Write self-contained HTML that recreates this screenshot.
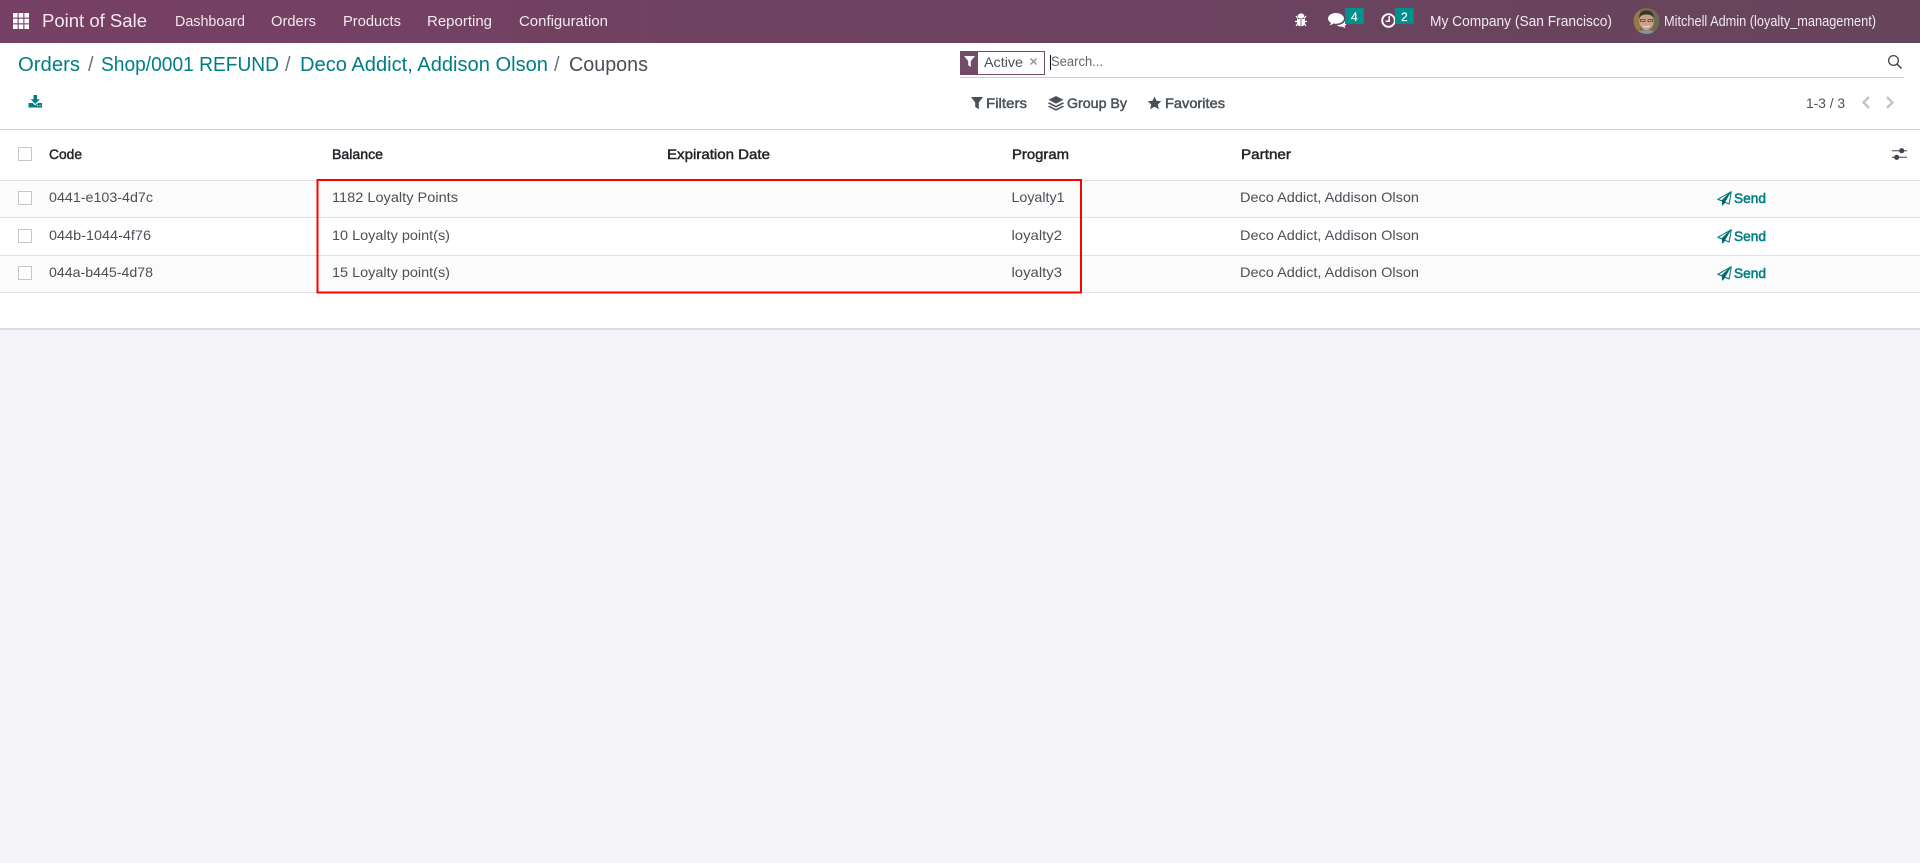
<!DOCTYPE html>
<html lang="en">
<head>
<meta charset="utf-8">
<title>Coupons - Point of Sale</title>
<style>
html,body{margin:0;padding:0;background:#f4f4f9;width:1920px;height:863px;overflow:hidden}
svg{display:block}
text{font-family:"Liberation Sans",sans-serif;font-size:14px;fill:#4c5057}
.nav{fill:#f1e9ee;font-size:14.5px}
.bc{font-size:20px;fill:#017e84}
.sl{font-size:20px;fill:#6f7278}
.hd{fill:#212529;stroke:#212529;stroke-width:.45px}
.cp{fill:#495057;stroke:#495057;stroke-width:.45px}
.snd{fill:#017e84;stroke:#017e84;stroke-width:.55px}
</style>
</head>
<body>
<svg width="1920" height="863" viewBox="0 0 1920 863" xmlns="http://www.w3.org/2000/svg">
<defs>
<linearGradient id="navg" x1="0" x2="1" y1="0" y2="0"><stop offset="0" stop-color="#764065"/><stop offset="1" stop-color="#66445c"/></linearGradient>
<clipPath id="av"><circle cx="1646.5" cy="21" r="13"/></clipPath>
<g id="plane">
<path d="M14.300 .7L.8 8.300l4 1.500L14.300 .7l-2.200 12.300-4.200-1.800-2.400 2.800v-4" fill="none" stroke="#017e84" stroke-width="1.100" stroke-linejoin="round"/>
<path d="M5 10l9-9-6 10.200-2.300 2.900z" fill="#0b5f66"/>
</g>
</defs>

<!-- main panels -->
<rect width="1920" height="863" fill="#f4f4f9"/>
<rect y="43" width="1920" height="286" fill="#fff"/>
<rect y="328" width="1920" height="2" fill="#dcdce2"/>

<!-- navbar -->
<rect width="1920" height="43" fill="url(#navg)"/>
<g fill="#fff">
<rect x="13" y="13" width="4.600" height="4.600"/><rect x="18.700" y="13" width="4.600" height="4.600"/><rect x="24.400" y="13" width="4.600" height="4.600"/>
<rect x="13" y="18.700" width="4.600" height="4.600"/><rect x="18.700" y="18.700" width="4.600" height="4.600"/><rect x="24.400" y="18.700" width="4.600" height="4.600"/>
<rect x="13" y="24.400" width="4.600" height="4.600"/><rect x="18.700" y="24.400" width="4.600" height="4.600"/><rect x="24.400" y="24.400" width="4.600" height="4.600"/>
</g>
<text x="42" y="27" class="nav" style="font-size:18px" textLength="105" lengthAdjust="spacingAndGlyphs">Point of Sale</text>
<text x="175" y="26" class="nav" textLength="70" lengthAdjust="spacingAndGlyphs">Dashboard</text>
<text x="271" y="26" class="nav" textLength="45" lengthAdjust="spacingAndGlyphs">Orders</text>
<text x="343" y="26" class="nav" textLength="58" lengthAdjust="spacingAndGlyphs">Products</text>
<text x="427" y="26" class="nav" textLength="65" lengthAdjust="spacingAndGlyphs">Reporting</text>
<text x="519" y="26" class="nav" textLength="89" lengthAdjust="spacingAndGlyphs">Configuration</text>

<!-- bug -->
<g fill="#fff">
<ellipse cx="1301" cy="16" rx="3.200" ry="2.600"/>
<path d="M1297 19h8v3.500c0 2.400-1.600 3.800-3.500 3.800h-1c-1.900 0-3.500-1.400-3.500-3.800z"/>
</g>
<path d="M1296 16l2 2.500M1306 16l-2 2.500M1295 21.500h3M1307 21.500h-3M1296 26l2-2.500M1306 26l-2-2.500" stroke="#fff" stroke-width="1.200" fill="none"/>
<path d="M1301 19v7.500" stroke="#6a435e" stroke-width=".8"/>
<!-- chat -->
<path d="M1336 13c-4.400 0-8 2.400-8 5.500 0 1.800 1.200 3.300 3 4.300-.3 1-.9 1.800-1.600 2.500 1.600-.2 3-.9 4-1.800.8.100 1.700.2 2.600.2 4.400 0 8-2.300 8-5.200s-3.600-5.500-8-5.500z" fill="#fff"/>
<path d="M1345 20.500c1 .8 1.500 1.700 1.500 2.700 0 1.200-.8 2.200-2 2.900.2.700.7 1.300 1.200 1.900-1.300-.2-2.400-.7-3.200-1.400-2.300.3-4.500-.3-5.800-1.500 3.800.1 7.800-1.800 8.300-4.600z" fill="#fff"/>
<rect x="1345" y="8" width="19" height="16" fill="#00918e"/>
<text x="1351" y="21" style="font-size:12px;fill:#fff;stroke:#fff;stroke-width:.2px">4</text>
<!-- clock -->
<circle cx="1388.500" cy="20.500" r="6.300" fill="none" stroke="#fff" stroke-width="1.900"/>
<path d="M1389.200 16v5.200h-3.600" fill="none" stroke="#fff" stroke-width="1.500"/>
<rect x="1395" y="8" width="19" height="16" fill="#00918e"/>
<text x="1401" y="21" style="font-size:12px;fill:#fff;stroke:#fff;stroke-width:.2px">2</text>

<text x="1430" y="26" class="nav" textLength="182" lengthAdjust="spacingAndGlyphs">My Company (San Francisco)</text>
<!-- avatar -->
<g clip-path="url(#av)">
<rect x="1633" y="8" width="27" height="26" fill="#7d6a45"/>
<rect x="1633" y="8" width="7" height="26" fill="#96794a"/>
<rect x="1654" y="8" width="6" height="26" fill="#6d6a52"/>
<ellipse cx="1646.500" cy="21.500" rx="7.200" ry="8.500" fill="#c9a08a"/>
<path d="M1639 18c0-5.500 3.500-7.500 7.500-7.500s7.500 2 7 7c-1.500-2-3.500-3-7-3s-6 1-7.500 3.500z" fill="#3a322c"/>
<path d="M1640.500 19.500h4.500v2h-4.500zM1648 19.500h4.500v2h-4.500z" fill="none" stroke="#4f4540" stroke-width=".8"/>
<path d="M1643 26q3.500 1.800 7 0" fill="none" stroke="#eadcd2" stroke-width="1.200"/>
<path d="M1636 34c1-3 5-4 10-4s9 1 11 4z" fill="#87939b"/>
</g>
<text x="1664" y="26" class="nav" textLength="212" lengthAdjust="spacingAndGlyphs">Mitchell Admin (loyalty_management)</text>

<!-- breadcrumb -->
<text x="18" y="71" class="bc" textLength="62" lengthAdjust="spacingAndGlyphs">Orders</text>
<text x="88" y="71" class="sl">/</text>
<text x="101" y="71" class="bc" textLength="178" lengthAdjust="spacingAndGlyphs">Shop/0001 REFUND</text>
<text x="285" y="71" class="sl">/</text>
<text x="300" y="71" class="bc" textLength="248" lengthAdjust="spacingAndGlyphs">Deco Addict, Addison Olson</text>
<text x="554" y="71" class="sl">/</text>
<text x="569" y="71" class="bc" style="fill:#4b4f55" textLength="79" lengthAdjust="spacingAndGlyphs">Coupons</text>

<!-- download -->
<path d="M33.500 95h3.500v4.200h2.800l-4.500 4.800-4.600-4.800h2.800z" fill="#017e84"/>
<path d="M28.500 103h4l2.800 2.400 2.800-2.400h3.900v4.500h-13.500z" fill="#017e84"/>
<rect x="37" y="105" width="1.200" height="1" fill="#d8efef"/><rect x="39.500" y="105" width="1.200" height="1" fill="#d8efef"/>

<!-- search -->
<rect x="960.500" y="51.500" width="84" height="23" fill="#fff" stroke="#714b67"/>
<rect x="960" y="51" width="18" height="24" fill="#714b67"/>
<path d="M964 56h11l-4.200 5v6l-2.600-1.800v-4.200z" fill="#fff"/>
<text x="984" y="67" style="fill:#4c5057" textLength="39" lengthAdjust="spacingAndGlyphs">Active</text>
<path d="M1030.500 58.500l6 6M1036.500 58.500l-6 6" stroke="#8a8d93" stroke-width="1.300"/>
<rect x="1050" y="55" width="1" height="15" fill="#111"/>
<text x="1051" y="66" style="fill:#5f6670" textLength="52" lengthAdjust="spacingAndGlyphs">Search...</text>
<rect x="960" y="77" width="944" height="1" fill="#cfcfd3"/>
<circle cx="1893.500" cy="60.500" r="4.900" fill="none" stroke="#3e4650" stroke-width="1.300"/>
<path d="M1897 64l4.500 4.500" stroke="#3e4650" stroke-width="1.500"/>

<!-- filters row -->
<path d="M971 97h12l-4.200 5.500v6.800l-3.600-2.300v-4.500z" fill="#495057"/>
<text x="986" y="108" class="cp" textLength="41" lengthAdjust="spacingAndGlyphs">Filters</text>
<path d="M1056 96l7.500 3.800-7.500 3.800-7.500-3.800z" fill="#495057"/>
<path d="M1049 102.300l7 3.500 7-3.500 1 1.200-8 4-8-4zM1049 105.600l7 3.400 7-3.400 1 1.200-8 3.900-8-3.900z" fill="#495057"/>
<text x="1067" y="108" class="cp" textLength="60" lengthAdjust="spacingAndGlyphs">Group By</text>
<path d="M1154.500 96.500l2 4.300 4.800.5-3.500 3.200 1 4.700-4.300-2.400-4.300 2.400 1-4.700-3.500-3.200 4.800-.5z" fill="#495057"/>
<text x="1165" y="108" class="cp" textLength="60" lengthAdjust="spacingAndGlyphs">Favorites</text>

<!-- pager -->
<text x="1806" y="108" style="fill:#4c5057" textLength="39" lengthAdjust="spacingAndGlyphs">1-3 / 3</text>
<path d="M1869 97l-5.500 5.500 5.500 5.500" fill="none" stroke="#c3c4cb" stroke-width="2.400"/>
<path d="M1887 97l5.500 5.500-5.500 5.500" fill="none" stroke="#c3c4cb" stroke-width="2.400"/>

<rect y="129" width="1920" height="1" fill="#cfcfd6"/>

<!-- rows -->
<rect y="180" width="1920" height="37" fill="#fbfbfb"/>
<rect y="255" width="1920" height="37" fill="#fbfbfb"/>
<g fill="#dfdfe4">
<rect y="180" width="1920" height="1"/><rect y="217" width="1920" height="1"/><rect y="255" width="1920" height="1"/><rect y="292" width="1920" height="1"/>
</g>

<!-- checkboxes -->
<g fill="#fff" stroke="#c4c6cb">
<rect x="18.500" y="147.500" width="13" height="13"/>
<rect x="18.500" y="191.500" width="13" height="13"/>
<rect x="18.500" y="229.500" width="13" height="13"/>
<rect x="18.500" y="266.500" width="13" height="13"/>
</g>

<!-- header -->
<text x="49" y="159" class="hd" textLength="33" lengthAdjust="spacingAndGlyphs">Code</text>
<text x="332" y="159" class="hd" textLength="51" lengthAdjust="spacingAndGlyphs">Balance</text>
<text x="667" y="159" class="hd" textLength="103" lengthAdjust="spacingAndGlyphs">Expiration Date</text>
<text x="1012" y="159" class="hd" textLength="57" lengthAdjust="spacingAndGlyphs">Program</text>
<text x="1241" y="159" class="hd" textLength="50" lengthAdjust="spacingAndGlyphs">Partner</text>
<path d="M1892 150.700h15M1892 157.300h15" stroke="#3f4450" stroke-width="1"/>
<circle cx="1901.700" cy="150.700" r="2.600" fill="#3f4450"/><circle cx="1896.700" cy="157.300" r="2.600" fill="#3f4450"/>

<!-- row 1 -->
<text x="49" y="202" textLength="104" lengthAdjust="spacingAndGlyphs">0441-e103-4d7c</text>
<text x="332" y="202" textLength="126" lengthAdjust="spacingAndGlyphs">1182 Loyalty Points</text>
<text x="1011.500" y="202" textLength="53" lengthAdjust="spacingAndGlyphs">Loyalty1</text>
<text x="1240" y="202" textLength="179" lengthAdjust="spacingAndGlyphs">Deco Addict, Addison Olson</text>
<!-- row 2 -->
<text x="49" y="240" textLength="102" lengthAdjust="spacingAndGlyphs">044b-1044-4f76</text>
<text x="332" y="240" textLength="118" lengthAdjust="spacingAndGlyphs">10 Loyalty point(s)</text>
<text x="1011.500" y="240" textLength="50.500" lengthAdjust="spacingAndGlyphs">loyalty2</text>
<text x="1240" y="240" textLength="179" lengthAdjust="spacingAndGlyphs">Deco Addict, Addison Olson</text>
<!-- row 3 -->
<text x="49" y="277" textLength="104" lengthAdjust="spacingAndGlyphs">044a-b445-4d78</text>
<text x="332" y="277" textLength="118" lengthAdjust="spacingAndGlyphs">15 Loyalty point(s)</text>
<text x="1011.500" y="277" textLength="50.500" lengthAdjust="spacingAndGlyphs">loyalty3</text>
<text x="1240" y="277" textLength="179" lengthAdjust="spacingAndGlyphs">Deco Addict, Addison Olson</text>

<!-- send -->
<use href="#plane" x="1717" y="191"/>
<text x="1734" y="203" class="snd" textLength="32" lengthAdjust="spacingAndGlyphs">Send</text>
<use href="#plane" x="1717" y="229"/>
<text x="1734" y="241" class="snd" textLength="32" lengthAdjust="spacingAndGlyphs">Send</text>
<use href="#plane" x="1717" y="266"/>
<text x="1734" y="278" class="snd" textLength="32" lengthAdjust="spacingAndGlyphs">Send</text>

<!-- red annotation -->
<rect x="317.500" y="180" width="763.500" height="112.500" fill="none" stroke="#f00" stroke-width="2"/>
</svg>
</body>
</html>
